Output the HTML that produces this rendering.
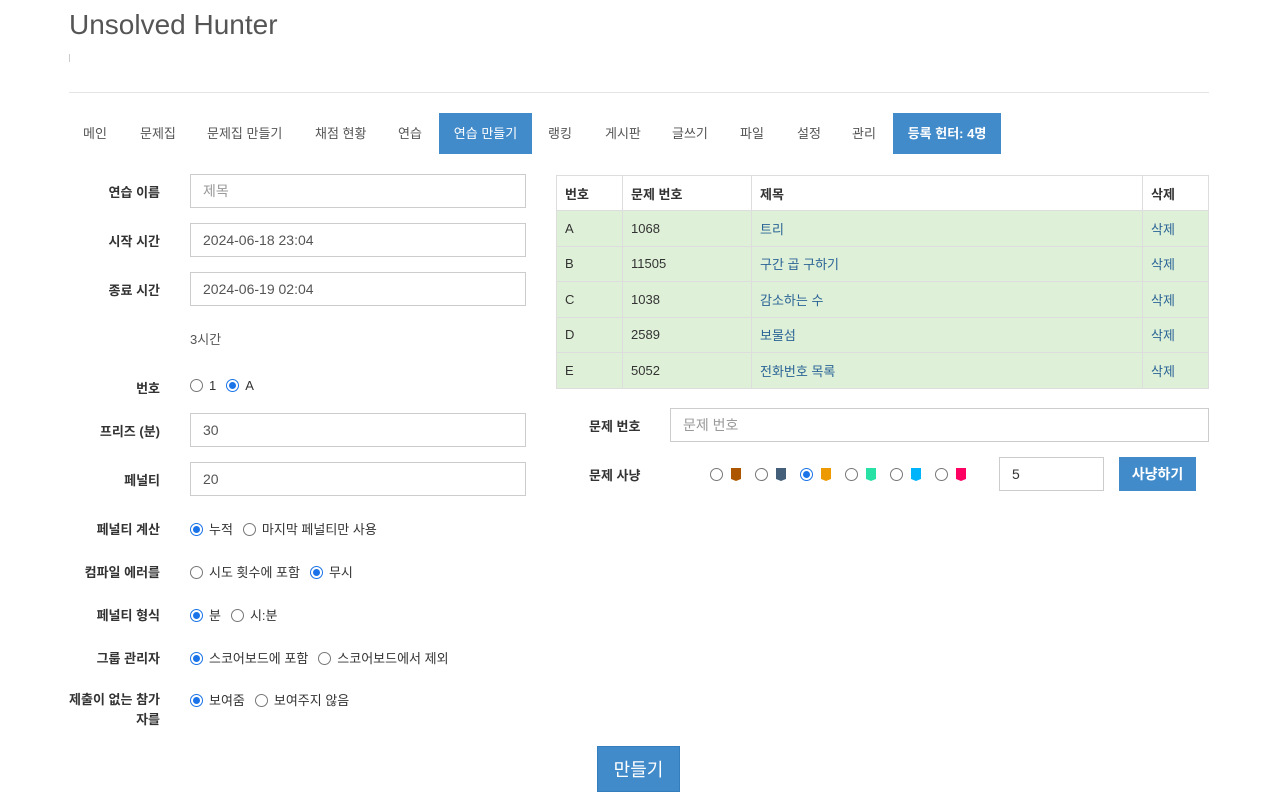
<!DOCTYPE html>
<html><head><meta charset="utf-8"><style>
*{box-sizing:border-box}
body{margin:0;width:1280px;height:800px;background:#fff;font-family:"Liberation Sans","Noto Sans CJK KR",sans-serif;font-size:13px;color:#333;position:relative;overflow:hidden}
.a{position:absolute;white-space:nowrap}
h1{position:absolute;left:69px;top:9px;margin:0;font-weight:400;font-size:28px;color:#555}
.hr{position:absolute;left:69px;width:1140px;top:92px;border-top:1px solid #e5e5e5}
.tab{position:absolute;top:113px;height:41px;line-height:41px;color:#555;font-size:13px}
.act{background:#428bca;color:#fff;text-align:center}
.lbl{position:absolute;width:160px;left:0;text-align:right;font-weight:bold;font-size:13px;color:#333}
.inp{position:absolute;left:190px;width:336px;height:34px;border:1px solid #ccc;padding:0 12px;line-height:32px;font-size:14px;color:#555}
.r{display:inline-block;width:13px;height:13px;border:1px solid #777;border-radius:50%;vertical-align:-2px;margin-right:6px;position:relative}
.r.on{border-color:#1a73e8}
.r.on:after{content:"";position:absolute;left:2px;top:2px;width:7px;height:7px;border-radius:50%;background:#1a73e8}
.rg{position:absolute;left:190px;font-size:13px;color:#333}
.rg span.t{margin-right:10px}
table{position:absolute;left:556px;top:175px;width:653px;border-collapse:collapse;font-size:13px}
td,th{border:1px solid #ddd;padding:0 8px;height:35.5px;text-align:left}
th{height:35px;font-weight:bold;background:#fff}
tr.g td{background:#dff0d8}
a{color:#2a6496;text-decoration:none}
.hunt .r{margin-right:8px}
.tag{display:inline-block;width:10px;height:13px;vertical-align:-2px;margin-right:14px;clip-path:polygon(0 0,100% 0,100% 85%,50% 100%,0 85%)}
</style></head><body>
<h1>Unsolved Hunter</h1>
<div class="a" style="left:69px;top:54px;width:1px;height:8px;background:#ccc"></div>
<div class="hr"></div>
<div class="tab" style="left:83px">메인</div>
<div class="tab" style="left:140px">문제집</div>
<div class="tab" style="left:207px">문제집 만들기</div>
<div class="tab" style="left:315px">채점 현황</div>
<div class="tab" style="left:398px">연습</div>
<div class="tab act" style="left:439px;width:93px">연습 만들기</div>
<div class="tab" style="left:548px">랭킹</div>
<div class="tab" style="left:605px">게시판</div>
<div class="tab" style="left:672px">글쓰기</div>
<div class="tab" style="left:740px">파일</div>
<div class="tab" style="left:797px">설정</div>
<div class="tab" style="left:852px">관리</div>
<div class="tab act" style="left:893px;width:108px;font-weight:bold">등록 헌터: 4명</div>

<div class="lbl" style="top:182px">연습 이름</div><div class="inp" style="top:174px;color:#999">제목</div>
<div class="lbl" style="top:231px">시작 시간</div><div class="inp" style="top:223px">2024-06-18 23:04</div>
<div class="lbl" style="top:280px">종료 시간</div><div class="inp" style="top:272px">2024-06-19 02:04</div>
<div class="a" style="left:190px;top:329px;color:#555">3시간</div>
<div class="lbl" style="top:378px">번호</div><div class="rg" style="top:378px"><span class="r"></span><span class="t">1</span><span class="r on"></span>A</div>
<div class="lbl" style="top:421px">프리즈 (분)</div><div class="inp" style="top:413px">30</div>
<div class="lbl" style="top:470px">페널티</div><div class="inp" style="top:462px">20</div>
<div class="lbl" style="top:519px">페널티 계산</div><div class="rg" style="top:519px"><span class="r on"></span><span class="t">누적</span><span class="r"></span>마지막 페널티만 사용</div>
<div class="lbl" style="top:562px">컴파일 에러를</div><div class="rg" style="top:562px"><span class="r"></span><span class="t">시도 횟수에 포함</span><span class="r on"></span>무시</div>
<div class="lbl" style="top:605px">페널티 형식</div><div class="rg" style="top:605px"><span class="r on"></span><span class="t">분</span><span class="r"></span>시:분</div>
<div class="lbl" style="top:648px">그룹 관리자</div><div class="rg" style="top:648px"><span class="r on"></span><span class="t">스코어보드에 포함</span><span class="r"></span>스코어보드에서 제외</div>
<div class="lbl" style="top:690px;line-height:20px;white-space:normal;padding-left:60px">제출이 없는 참가자를</div><div class="rg" style="top:690px"><span class="r on"></span><span class="t">보여줌</span><span class="r"></span>보여주지 않음</div>

<table>
<tr><th style="width:66px">번호</th><th style="width:129px">문제 번호</th><th>제목</th><th style="width:66px">삭제</th></tr>
<tr class="g"><td>A</td><td>1068</td><td><a>트리</a></td><td><a>삭제</a></td></tr>
<tr class="g"><td>B</td><td>11505</td><td><a>구간 곱 구하기</a></td><td><a>삭제</a></td></tr>
<tr class="g"><td>C</td><td>1038</td><td><a>감소하는 수</a></td><td><a>삭제</a></td></tr>
<tr class="g"><td>D</td><td>2589</td><td><a>보물섬</a></td><td><a>삭제</a></td></tr>
<tr class="g"><td>E</td><td>5052</td><td><a>전화번호 목록</a></td><td><a>삭제</a></td></tr>
</table>
<div class="a" style="left:589px;top:416px;font-weight:bold">문제 번호</div>
<div class="a" style="left:670px;top:408px;width:539px;height:34px;border:1px solid #ccc;padding:0 12px;line-height:32px;font-size:14px;color:#999">문제 번호</div>
<div class="a" style="left:589px;top:465px;font-weight:bold">문제 사냥</div>
<div class="a hunt" style="left:710px;top:467px"><span class="r"></span><span class="tag" style="background:#ad5600"></span><span class="r"></span><span class="tag" style="background:#435f7a"></span><span class="r on"></span><span class="tag" style="background:#ec9a00"></span><span class="r"></span><span class="tag" style="background:#27e2a4"></span><span class="r"></span><span class="tag" style="background:#00b4fc"></span><span class="r"></span><span class="tag" style="background:#ff0062"></span></div>
<div class="a" style="left:999px;top:457px;width:105px;height:34px;border:1px solid #ccc;padding:0 12px;line-height:32px;font-size:14px">5</div>
<div class="a" style="left:1119px;top:457px;width:77px;height:34px;background:#428bca;color:#fff;text-align:center;line-height:34px;font-size:14px;font-weight:bold">사냥하기</div>
<div class="a" style="left:597px;top:746px;width:83px;height:46px;background:#428bca;color:#fff;text-align:center;line-height:46px;font-size:18px;border:1px solid #357ebd">만들기</div>
</body></html>
